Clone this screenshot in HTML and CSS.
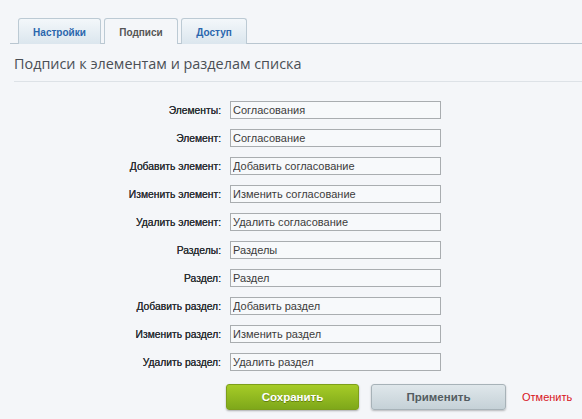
FILE: index.html
```html
<!DOCTYPE html>
<html lang="ru">
<head>
<meta charset="utf-8">
<link rel="stylesheet" href="styles.css">
</head>
<body>
<div class="page">
  <div class="tabs">
    <div class="tab tab-1">Настройки</div>
    <div class="tab tab-2 active">Подписи</div>
    <div class="tab tab-3">Доступ</div>
  </div>
  <div class="panel">
    <h1 class="title">Подписи к элементам и разделам списка</h1>
    <div class="form">
      <label class="lbl">Элементы:</label><input class="inp" value="Согласования">
      <label class="lbl">Элемент:</label><input class="inp" value="Согласование">
      <label class="lbl">Добавить элемент:</label><input class="inp" value="Добавить согласование">
      <label class="lbl">Изменить элемент:</label><input class="inp" value="Изменить согласование">
      <label class="lbl">Удалить элемент:</label><input class="inp" value="Удалить согласование">
      <label class="lbl">Разделы:</label><input class="inp" value="Разделы">
      <label class="lbl">Раздел:</label><input class="inp" value="Раздел">
      <label class="lbl">Добавить раздел:</label><input class="inp" value="Добавить раздел">
      <label class="lbl">Изменить раздел:</label><input class="inp" value="Изменить раздел">
      <label class="lbl">Удалить раздел:</label><input class="inp" value="Удалить раздел">
    </div>
    <div class="actions">
      <button class="btn btn-save">Сохранить</button>
      <button class="btn btn-apply">Применить</button>
      <a class="cancel">Отменить</a>
    </div>
  </div>
</div>
</body>
</html>
```
FILE: styles.css
```css
html, body {
  margin: 0;
  padding: 0;
  background: #f4f6f9;
  font-family: "Liberation Sans", Arial, sans-serif;
}
.page {
  width: 582px;
  height: 419px;
  overflow: hidden;
}
.tabs {
  display: flex;
  gap: 3px;
  padding: 18px 0 0 8px;
  margin-left: 10px;
  border-bottom: 1px solid #b9c6d0;
  height: 25px;
}
.tab {
  box-sizing: border-box;
  height: 26px;
  border: 1px solid #bccad4;
  border-bottom: none;
  border-radius: 3px 3px 0 0;
  background: linear-gradient(#f3f7fa, #dbe6ee);
  color: #2a66ad;
  font-weight: bold;
  font-size: 10px;
  display: flex;
  align-items: center;
  justify-content: center;
  padding-top: 2px;
}
.tab-1 { width: 83px; }
.tab-2 { width: 74px; }
.tab-3 { width: 66px; }
.tab.active {
  background: #f4f6f9;
  color: #555;
  position: relative;
  z-index: 1;
}
.panel {
  padding-left: 14px;
}
.title {
  margin: 0;
  font-family: "Open Sans", "Liberation Sans", sans-serif;
  font-weight: normal;
  font-size: 14.4px;
  color: #4a4f55;
  height: 37px;
  line-height: 40px;
  border-bottom: 1px solid #dde2e7;
}
.form {
  display: grid;
  grid-template-columns: 207px 211px;
  column-gap: 9px;
  row-gap: 10px;
  padding-top: 19px;
  align-items: center;
}
.lbl {
  text-align: right;
  font-size: 10.3px;
  font-weight: normal;
  color: #2a2e32;
  text-shadow: 0 0 0.5px #2a2e32;
}
.inp {
  box-sizing: border-box;
  width: 211px;
  height: 18px;
  margin: 0;
  border: 1px solid #a9adb0;
  background: #f7f9fb;
  font-family: "Liberation Sans", Arial, sans-serif;
  font-size: 11px;
  color: #3c3c3c;
  padding: 0 2px;
  outline: none;
}
.actions {
  display: flex;
  align-items: center;
  padding-left: 212px;
  margin-top: 13px;
}
.btn {
  box-sizing: border-box;
  height: 26px;
  border-radius: 3px;
  font-family: "Liberation Sans", Arial, sans-serif;
  font-weight: bold;
  font-size: 11.5px;
  padding: 0;
}
.btn-save {
  width: 133px;
  border: 1px solid #7d9f1a;
  background: linear-gradient(#a6cc27, #7ea81a);
  color: #fff;
  text-shadow: 0 1px 0 rgba(60, 80, 0, 0.5);
  box-shadow: 0 1px 2px rgba(0, 0, 0, 0.3);
}
.btn-apply {
  width: 135px;
  margin-left: 12px;
  border: 1px solid #a7b2b8;
  background: linear-gradient(#dfe7eb, #c5d1d7);
  color: #535c61;
  box-shadow: 0 1px 2px rgba(0, 0, 0, 0.25);
}
.cancel {
  margin-left: 16px;
  font-size: 11px;
  color: #d8141c;
}
```
